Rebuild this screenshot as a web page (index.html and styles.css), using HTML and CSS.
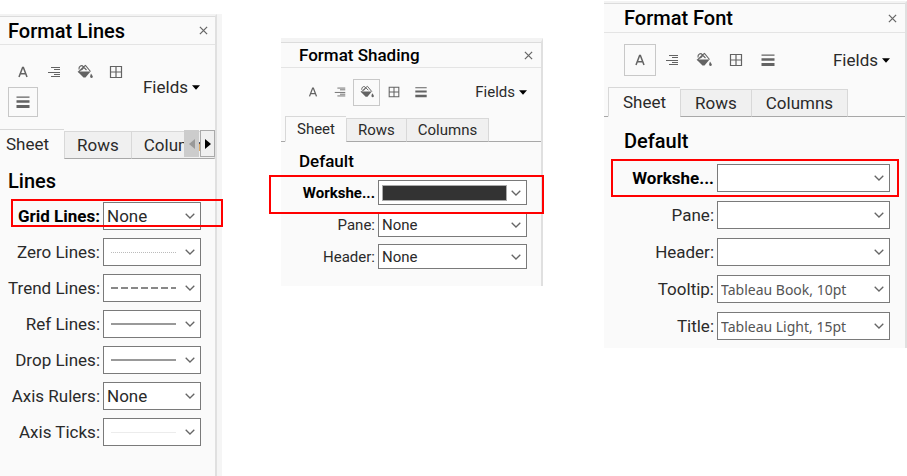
FILE: index.html
```
<!DOCTYPE html>
<html lang="en">
<head>
<meta charset="utf-8">
<title>Format panes</title>
<link rel="stylesheet" href="styles.css">
</head>
<body>
<svg class="defs" aria-hidden="true">
  <symbol id="i-font" viewBox="0 0 16 16"><path d="M4 13 7.6 3.5h.8L12 13M5.2 9.8h5.6" fill="none" stroke="currentColor" stroke-width="1.5"/></symbol>
  <symbol id="i-align" viewBox="0 0 16 16"><path d="M5 3.5h9M8 5.5h6M2 8.5h12M8 10.5h6M5 12.5h9" fill="none" stroke="currentColor"/></symbol>
  <symbol id="i-fill" viewBox="0 0 16 16"><path d="M1.500 8 7 2.500l1.500-1L13.500 7.500M2 5.500C1.500 2 5 .8 6 2.500S5 6 3.500 6M6 2.500 9.500 6" fill="none" stroke="currentColor" stroke-width="1.100"/><path d="M.5 7.500h13L8.500 13.500h-2zM14 9.500c1.300 2 2 2.500 1.800 3.500-.3 1.200-2.300 1.200-2.600 0-.2-1 .1-1.500.8-3.500z" fill="currentColor"/></symbol>
  <symbol id="i-border" viewBox="0 0 16 16"><path d="M2.500 2.500h11v11h-11zM8 2.500v11M2.500 8h11" fill="none" stroke="currentColor" stroke-width="1.200"/></symbol>
  <symbol id="i-lines" viewBox="0 0 16 16"><path d="M1.500 2.500h13v1.300h-13zM1.500 6.300h13v2.400h-13zM1.500 11h13v3h-13z" fill="currentColor"/></symbol>
  <symbol id="i-close" viewBox="0 0 10 10"><path d="m1 1 8 8M9 1 1 9" fill="none" stroke="currentColor" stroke-width="1.400"/></symbol>
  <symbol id="i-chevron" viewBox="0 0 10 6"><path d="m.7.7 4.300 4.300L9.300.7" fill="none" stroke="currentColor" stroke-width="1.300"/></symbol>
  <symbol id="i-caret" viewBox="0 0 8 5"><path d="M0 .3h8L4 4.800z" fill="currentColor"/></symbol>
</svg>

<section class="pane pane-lines">
  <header class="head"><h2>Format Lines</h2><button class="close" aria-label="Close"><svg><use href="#i-close"/></svg></button></header>
  <div class="bar">
    <div class="tools">
      <button aria-label="Font"><svg><use href="#i-font"/></svg></button>
      <button aria-label="Alignment"><svg><use href="#i-align"/></svg></button>
      <button aria-label="Shading"><svg><use href="#i-fill"/></svg></button>
      <button aria-label="Borders"><svg><use href="#i-border"/></svg></button>
      <button class="on" aria-label="Lines"><svg><use href="#i-lines"/></svg></button>
    </div>
    <button class="fields">Fields<svg><use href="#i-caret"/></svg></button>
  </div>
  <nav class="tabs">
    <button class="tab active">Sheet</button><button class="tab">Rows</button><button class="tab last">Columns</button>
    <div class="scroll"><button aria-label="Previous tabs" disabled><svg viewBox="0 0 6 10"><path d="M6 0v10L0 5z" fill="currentColor"/></svg></button><button aria-label="Next tabs"><svg viewBox="0 0 6 10"><path d="M0 0v10l6-5z" fill="currentColor"/></svg></button></div>
  </nav>
  <div class="body">
    <h3>Lines</h3>
    <div class="row marked"><label for="grid">Grid Lines:</label><div class="pick"><select id="grid"><option>None</option></select><svg><use href="#i-chevron"/></svg></div></div>
    <div class="row"><label for="zero">Zero Lines:</label><div class="pick"><select id="zero"><option></option></select><i class="sample dotted"></i><svg><use href="#i-chevron"/></svg></div></div>
    <div class="row"><label for="trend">Trend Lines:</label><div class="pick"><select id="trend"><option></option></select><i class="sample dashed"></i><svg><use href="#i-chevron"/></svg></div></div>
    <div class="row"><label for="ref">Ref Lines:</label><div class="pick"><select id="ref"><option></option></select><i class="sample solid"></i><svg><use href="#i-chevron"/></svg></div></div>
    <div class="row"><label for="drop">Drop Lines:</label><div class="pick"><select id="drop"><option></option></select><i class="sample solid"></i><svg><use href="#i-chevron"/></svg></div></div>
    <div class="row"><label for="rulers">Axis Rulers:</label><div class="pick"><select id="rulers"><option>None</option></select><svg><use href="#i-chevron"/></svg></div></div>
    <div class="row"><label for="ticks">Axis Ticks:</label><div class="pick"><select id="ticks"><option></option></select><i class="sample faint"></i><svg><use href="#i-chevron"/></svg></div></div>
  </div>
</section>

<section class="pane pane-shading">
  <header class="head"><h2>Format Shading</h2><button class="close" aria-label="Close"><svg><use href="#i-close"/></svg></button></header>
  <div class="bar">
    <div class="tools">
      <button aria-label="Font"><svg><use href="#i-font"/></svg></button>
      <button aria-label="Alignment"><svg><use href="#i-align"/></svg></button>
      <button class="on" aria-label="Shading"><svg><use href="#i-fill"/></svg></button>
      <button aria-label="Borders"><svg><use href="#i-border"/></svg></button>
      <button aria-label="Lines"><svg><use href="#i-lines"/></svg></button>
    </div>
    <button class="fields">Fields<svg><use href="#i-caret"/></svg></button>
  </div>
  <nav class="tabs">
    <button class="tab active">Sheet</button><button class="tab">Rows</button><button class="tab last">Columns</button>
  </nav>
  <div class="body">
    <h3>Default</h3>
    <div class="row marked"><label for="s-work">Workshe...</label><div class="pick"><select id="s-work"><option></option></select><i class="swatch"></i><svg><use href="#i-chevron"/></svg></div></div>
    <div class="row"><label for="s-pane">Pane:</label><div class="pick"><select id="s-pane"><option>None</option></select><svg><use href="#i-chevron"/></svg></div></div>
    <div class="row"><label for="s-header">Header:</label><div class="pick"><select id="s-header"><option>None</option></select><svg><use href="#i-chevron"/></svg></div></div>
  </div>
</section>

<section class="pane pane-font">
  <header class="head"><h2>Format Font</h2><button class="close" aria-label="Close"><svg><use href="#i-close"/></svg></button></header>
  <div class="bar">
    <div class="tools">
      <button class="on" aria-label="Font"><svg><use href="#i-font"/></svg></button>
      <button aria-label="Alignment"><svg><use href="#i-align"/></svg></button>
      <button aria-label="Shading"><svg><use href="#i-fill"/></svg></button>
      <button aria-label="Borders"><svg><use href="#i-border"/></svg></button>
      <button aria-label="Lines"><svg><use href="#i-lines"/></svg></button>
    </div>
    <button class="fields">Fields<svg><use href="#i-caret"/></svg></button>
  </div>
  <nav class="tabs">
    <button class="tab active">Sheet</button><button class="tab">Rows</button><button class="tab last">Columns</button>
  </nav>
  <div class="body">
    <h3>Default</h3>
    <div class="row marked"><label for="f-work">Workshe...</label><div class="pick"><select id="f-work"><option></option></select><svg><use href="#i-chevron"/></svg></div></div>
    <div class="row"><label for="f-pane">Pane:</label><div class="pick"><select id="f-pane"><option></option></select><svg><use href="#i-chevron"/></svg></div></div>
    <div class="row"><label for="f-header">Header:</label><div class="pick"><select id="f-header"><option></option></select><svg><use href="#i-chevron"/></svg></div></div>
    <div class="row"><label for="f-tip">Tooltip:</label><div class="pick"><select id="f-tip" class="font-name"><option>Tableau Book, 10pt</option></select><svg><use href="#i-chevron"/></svg></div></div>
    <div class="row"><label for="f-title">Title:</label><div class="pick"><select id="f-title" class="font-name"><option>Tableau Light, 15pt</option></select><svg><use href="#i-chevron"/></svg></div></div>
  </div>
</section>
</body>
</html>
```
FILE: styles.css
```
* { box-sizing: border-box; }

body {
  margin: 0;
  min-height: 100vh;
  display: grid;
  grid-template-columns: 222fr 59fr 262fr 61fr 303fr;
  align-items: start;
  background: #fff;
  color: #2a2a2a;
  font-family: Roboto, "Liberation Sans", sans-serif;
}

.defs { display: none; }

button, select { font: inherit; color: inherit; border: 0; padding: 0; margin: 0; background: none; }
h2, h3 { margin: 0; color: #000; font-weight: 500; }

.pane {
  --text: 17px;
  --title: 20px;
  --cell: 31px;
  --box: 30px;
  --icon: 16px;
  --inset: 8px;
  --edge: 15px;
  --label: 92px;
  --field: 28px;
  --gap: 8px;
  --head: 29px;
  --bar: 84px;
  --tab: 30px;
  --tab-pad: 12px;
  --section: 43px;
  min-width: 0;
  background: #fafafa;
  border-top: 2px solid #f3f3f3;
  border-right: 2px solid #e0e0e0;
  font-size: var(--text);
}

.head {
  height: var(--head);
  display: flex;
  align-items: center;
  justify-content: space-between;
  padding: 0 8px 0 var(--inset);
  border-top: 1px solid #dcdcdc;
  border-bottom: 1px solid #e4e4e4;
}
.head h2 { font-size: var(--title); }
.close { display: flex; color: #666; }
.close svg { width: 9px; height: 9px; }

.bar {
  height: var(--bar);
  display: flex;
  align-items: center;
  justify-content: space-between;
  padding: 0 var(--edge) 0 var(--inset);
}
.tools { display: grid; grid-template-columns: repeat(5, var(--cell)); }
.tools button {
  width: var(--box);
  height: var(--box);
  display: grid;
  place-items: center;
  color: #636363;
}
.tools svg { width: var(--icon); height: var(--icon); }
.tools .on { border: 1px solid #c8c8c8; }
.fields { display: flex; align-items: center; gap: 4px; }
.fields svg { width: 8px; height: 5px; color: #000; }

.tabs {
  height: var(--tab);
  display: flex;
  align-items: flex-end;
  padding-left: 4px;
  box-shadow: inset 0 -1px #a8a8a8;
}
.tab {
  height: calc(100% - 2px);
  padding: 0 var(--tab-pad);
  background: #f0f0f0;
  border: 1px solid #d8d8d8;
  border-right: 0;
  border-bottom-color: #a8a8a8;
}
.tab.last { border-right: 1px solid #d8d8d8; }
.tab.active {
  height: 100%;
  background: #fafafa;
  border-bottom-color: #fafafa;
}

.body { padding: 0 var(--edge) 17px 8px; }
.body h3 {
  height: var(--section);
  padding-left: calc(var(--inset) - 8px);
  display: flex;
  align-items: center;
  font-size: var(--title);
}
.row {
  position: relative;
  display: grid;
  grid-template-columns: var(--label) 1fr;
  column-gap: 3px;
  align-items: center;
}
.row + .row { margin-top: var(--gap); }
.row label { text-align: right; white-space: nowrap; }
.marked label { color: #000; font-weight: 700; }
.marked::after {
  content: "";
  position: absolute;
  z-index: 1;
  inset: var(--mark);
  border: 2px solid #f00;
  pointer-events: none;
}

.pick { display: grid; grid-template-columns: 1fr 24px; align-items: center; }
.pick select {
  grid-area: 1 / 1 / 2 / 3;
  width: 100%;
  height: var(--field);
  padding-left: 3px;
  appearance: none;
  background: #fff;
  border: 1px solid #7a7a7a;
  border-radius: 0;
}
.pick svg { grid-area: 1 / 2; width: 10px; height: 6px; margin-left: 8px; color: #666; pointer-events: none; }
.pick .font-name { font-family: "Noto Sans", sans-serif; font-size: 14px; color: #555; }
.sample, .swatch { grid-area: 1 / 1; pointer-events: none; }
.sample { margin: 0 1px 0 8px; }
.dotted { border-top: 1px dotted #bbb; }
.dashed { height: 2px; background: repeating-linear-gradient(90deg, #888 0 7px, transparent 7px 10px); }
.solid { border-top: 2px solid #999; }
.faint { border-top: 1px solid #ececec; }
.swatch { height: 16px; margin: 0 -4px 0 4px; background: #333; border: 1px solid #aaa; }

.pane-lines {
  --mark: -3px -22px 3px 3px;
  align-self: stretch;
  margin-top: 14px;
  margin-right: 5px;
  box-shadow: 5px 0 #f5f5f5;
}
.pane-lines .head { padding-right: 7px; }
.pane-lines .body { padding-right: 14px; }
.pane-lines .bar { padding-right: 15px; }
.pane-lines .tools { grid-template-columns: repeat(4, var(--cell)); }
.pane-lines .tabs { padding-left: 0; position: relative; }
.pane-lines .tab.active { padding-left: 6px; padding-right: 15px; border-left: 0; }
.pane-lines .tab.last { flex: 1; min-width: 0; overflow: hidden; text-align: left; }
.scroll { position: absolute; right: 0; top: 1px; display: flex; gap: 1px; }
.scroll button {
  width: 15px;
  height: 27px;
  display: grid;
  place-items: center;
  background: #f0f0f0;
  border: 1px solid #aaa;
  color: #000;
}
.scroll button:disabled { background: #ccc; border-color: #ccc; color: #999; }
.scroll svg { width: 6px; height: 10px; }

.pane-shading {
  --text: 15px;
  --title: 17px;
  --cell: 27px;
  --box: 27px;
  --icon: 14px;
  --inset: 18px;
  --edge: 14px;
  --label: 86px;
  --field: 25px;
  --gap: 7px;
  --head: 26px;
  --bar: 48px;
  --tab: 26px;
  --tab-pad: 11px;
  --section: 38px;
  --mark: -5px -17px -9px -20px;
  grid-column: 3;
  margin-top: 38px;
  border-top-width: 4px;
}
.pane-font {
  --title: 20px;
  --cell: 32px;
  --box: 32px;
  --inset: 20px;
  --label: 102px;
  --gap: 9px;
  --head: 30px;
  --bar: 54px;
  --tab-pad: 14px;
  --section: 47px;
  --mark: -5px -9px -5px -1px;
  grid-column: 5;
  margin-top: 1px;
}
.pane-font .body { padding-bottom: 8px; }
```
